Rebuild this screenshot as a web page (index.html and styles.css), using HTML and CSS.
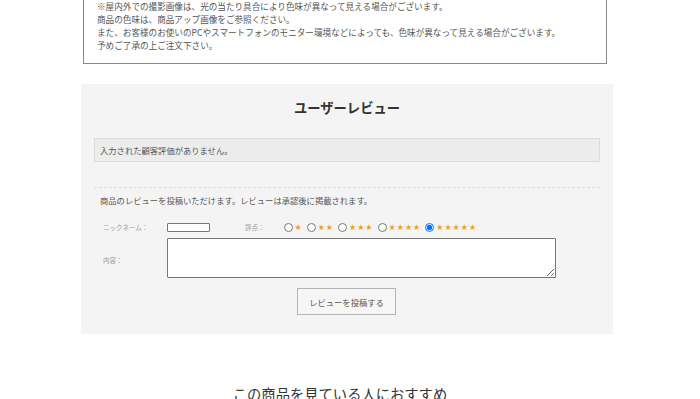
FILE: index.html
```html
<!DOCTYPE html>
<html lang="ja">
<head>
  <meta charset="UTF-8" />
  <meta name="viewport" content="width=device-width, initial-scale=1.0" />
  <title>ユーザーレビュー</title>
  <link rel="stylesheet" href="styles.css">
</head>
<body>
  <div class="page">
    <div class="notice-box">
      <p>※屋内外での撮影画像は、光の当たり具合により色味が異なって見える場合がございます。</p>
      <p>商品の色味は、商品アップ画像をご参照ください。</p>
      <p>また、お客様のお使いのPCやスマートフォンのモニター環境などによっても、色味が異なって見える場合がございます。</p>
      <p>予めご了承の上ご注文下さい。</p>
    </div>

    <div class="review">
      <h2>ユーザーレビュー</h2>
      <div class="review-empty">入力された顧客評価がありません。</div>

      <form class="review-form">
        <p class="review-intro">商品のレビューを投稿いただけます。レビューは承認後に掲載されます。</p>
        <div class="form-row">
          <label class="form-label">ニックネーム：</label>
          <input type="text" class="nickname">
          <span class="form-label rating-label">評点：</span>
          <div class="rating">
            <label><input type="radio" name="rating"><span>★</span></label>
            <label><input type="radio" name="rating"><span>★★</span></label>
            <label><input type="radio" name="rating"><span>★★★</span></label>
            <label><input type="radio" name="rating"><span>★★★★</span></label>
            <label><input type="radio" name="rating" checked><span>★★★★★</span></label>
          </div>
        </div>
        <div class="form-row form-row-body">
          <label class="form-label">内容：</label>
          <textarea class="content"></textarea>
        </div>
        <div class="form-submit">
          <button type="button" class="submit-btn">レビューを投稿する</button>
        </div>
      </form>
    </div>

    <h3 class="recommend">この商品を見ている人におすすめ</h3>
  </div>
</body>
</html>
```

FILE: styles.css
```css
body {
  margin: 0;
  padding: 0;
  background: #fff;
  color: #555;
  font-family: "Noto Sans CJK JP", "Noto Sans", sans-serif;
}

.page {
  width: 532px;
  margin-left: 81px;
}

.notice-box {
  margin: -13px 6px 0 2px;
  padding: 12px 13px 11px;
  border: 1px solid #8a8a8a;
  font-size: 8.6px;
  line-height: 13px;
  color: #555;
}

.notice-box p {
  margin: 0;
  white-space: nowrap;
}

.review {
  margin-top: 20px;
  background: #f4f4f4;
  padding: 15px 13px 19px;
}

.review h2 {
  margin: 0 0 22px;
  text-align: center;
  font-size: 13.3px;
  line-height: 17px;
  font-weight: bold;
  color: #333;
}

.review-empty {
  height: 22px;
  line-height: 22px;
  padding: 0 5px;
  background: #ececec;
  border: 1px solid #dcdcdc;
  font-size: 8.3px;
  color: #555;
}

.review-form {
  margin-top: 25px;
  border-top: 1px dashed #dedede;
}

.review-intro {
  margin: 6px 0 0 6px;
  font-size: 8.3px;
  line-height: 13px;
  white-space: nowrap;
}

.form-row {
  display: flex;
  align-items: center;
  margin-top: 15px;
}

.form-label {
  width: 64px;
  padding-left: 9px;
  font-size: 6.5px;
  color: #999;
  white-space: nowrap;
}

.nickname {
  width: 43px;
  height: 9px;
  margin: 0;
  padding: 0;
  box-sizing: border-box;
  border: 1px solid #777;
  border-radius: 1px;
  background: #fff;
}

.rating-label {
  width: auto;
  padding-left: 35px;
  margin-right: 19px;
}

.rating {
  display: flex;
  gap: 4px;
}

.rating label {
  display: flex;
  align-items: center;
  gap: 2px;
}

.rating input {
  width: 9px;
  height: 9px;
  margin: 0;
}

.rating span {
  font-family: "DejaVu Sans", sans-serif;
  font-size: 8px;
  line-height: 9px;
  color: #f0a020;
  letter-spacing: 1px;
}

.form-row-body {
  margin-top: 6px;
}

.form-row-body .form-label {
  align-self: flex-end;
  margin-bottom: 13px;
}

.content {
  width: 389px;
  height: 40px;
  margin: 0;
  padding: 0;
  box-sizing: border-box;
  border: 1px solid #777;
  border-radius: 1px;
  background: #fff;
  resize: both;
}

.form-submit {
  display: flex;
  justify-content: center;
  margin-top: 10px;
}

.submit-btn {
  width: 99px;
  height: 27px;
  margin-left: -1px;
  padding: 0;
  background: #f6f6f6;
  border: 1px solid #b5b5b5;
  border-radius: 0;
  font-family: "Noto Sans CJK JP", "Noto Sans", sans-serif;
  font-size: 8.3px;
  color: #555;
  cursor: pointer;
}

.recommend {
  margin: 50px 0 0;
  padding-right: 14px;
  text-align: center;
  font-size: 14.3px;
  font-weight: normal;
  line-height: 20px;
  color: #333;
}
```
